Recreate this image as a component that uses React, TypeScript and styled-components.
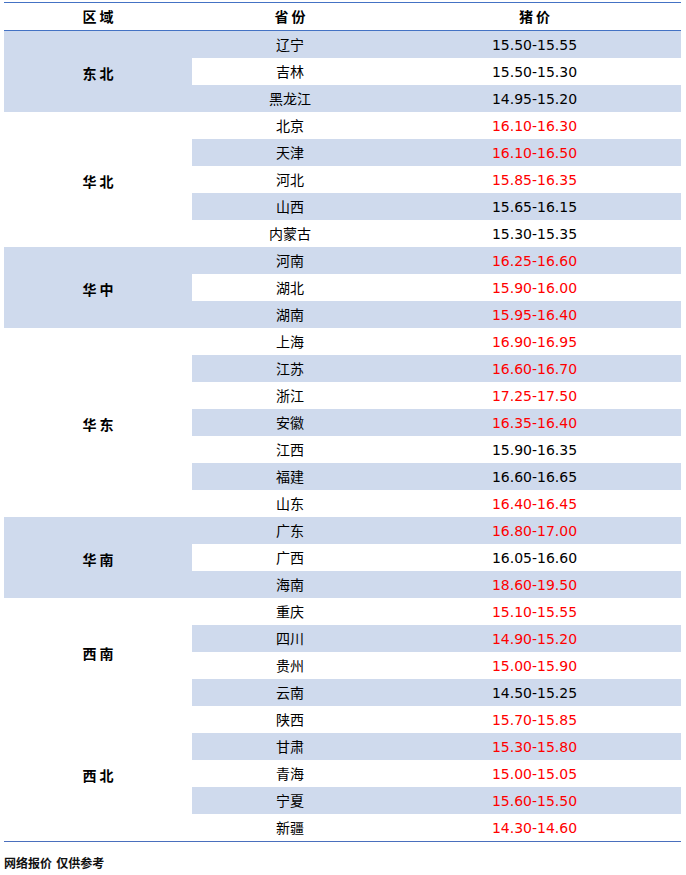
import { FC } from 'react';
import styled, { createGlobalStyle } from 'styled-components';

type Row = { province: string; price: string; up?: boolean };
type Group = { region: string; shaded: boolean; rows: Row[] };

const groups: Group[] = [
  {
    region: '东北',
    shaded: true,
    rows: [
      { province: '辽宁', price: '15.50-15.55' },
      { province: '吉林', price: '15.50-15.30' },
      { province: '黑龙江', price: '14.95-15.20' },
    ],
  },
  {
    region: '华北',
    shaded: false,
    rows: [
      { province: '北京', price: '16.10-16.30', up: true },
      { province: '天津', price: '16.10-16.50', up: true },
      { province: '河北', price: '15.85-16.35', up: true },
      { province: '山西', price: '15.65-16.15' },
      { province: '内蒙古', price: '15.30-15.35' },
    ],
  },
  {
    region: '华中',
    shaded: true,
    rows: [
      { province: '河南', price: '16.25-16.60', up: true },
      { province: '湖北', price: '15.90-16.00', up: true },
      { province: '湖南', price: '15.95-16.40', up: true },
    ],
  },
  {
    region: '华东',
    shaded: false,
    rows: [
      { province: '上海', price: '16.90-16.95', up: true },
      { province: '江苏', price: '16.60-16.70', up: true },
      { province: '浙江', price: '17.25-17.50', up: true },
      { province: '安徽', price: '16.35-16.40', up: true },
      { province: '江西', price: '15.90-16.35' },
      { province: '福建', price: '16.60-16.65' },
      { province: '山东', price: '16.40-16.45', up: true },
    ],
  },
  {
    region: '华南',
    shaded: true,
    rows: [
      { province: '广东', price: '16.80-17.00', up: true },
      { province: '广西', price: '16.05-16.60' },
      { province: '海南', price: '18.60-19.50', up: true },
    ],
  },
  {
    region: '西南',
    shaded: false,
    rows: [
      { province: '重庆', price: '15.10-15.55', up: true },
      { province: '四川', price: '14.90-15.20', up: true },
      { province: '贵州', price: '15.00-15.90', up: true },
      { province: '云南', price: '14.50-15.25' },
    ],
  },
  {
    region: '西北',
    shaded: false,
    rows: [
      { province: '陕西', price: '15.70-15.85', up: true },
      { province: '甘肃', price: '15.30-15.80', up: true },
      { province: '青海', price: '15.00-15.05', up: true },
      { province: '宁夏', price: '15.60-15.50', up: true },
      { province: '新疆', price: '14.30-14.60', up: true },
    ],
  },
];

const GlobalStyle = createGlobalStyle`
  body {
    margin: 0;
    background: #fff;
    font-family: "DejaVu Sans", "Noto Sans CJK SC", sans-serif;
    color: #000;
  }
`;

const App: FC = (): JSX.Element => {
  let index = 0;

  return (
    <Page>
      <GlobalStyle />
      <Table>
        <colgroup>
          <col style={{ width: 188 }} />
          <col style={{ width: 196 }} />
          <col style={{ width: 293 }} />
        </colgroup>
        <thead>
          <tr>
            <HeadCell>区域</HeadCell>
            <HeadCell>省份</HeadCell>
            <HeadCell>猪价</HeadCell>
          </tr>
        </thead>
        <tbody>
          {groups.map((group) =>
            group.rows.map((row, i) => {
              const shaded = index % 2 === 0;
              index += 1;
              return (
                <tr key={row.province}>
                  {i === 0 && (
                    <RegionCell rowSpan={group.rows.length} $shaded={group.shaded}>
                      {group.region}
                    </RegionCell>
                  )}
                  <Cell $shaded={shaded}>{row.province}</Cell>
                  <Cell $shaded={shaded} $up={row.up}>
                    {row.price}
                  </Cell>
                </tr>
              );
            })
          )}
        </tbody>
      </Table>
      <Note>网络报价 仅供参考</Note>
    </Page>
  );
};

const Page = styled.main`
  padding: 2px 0 0 4px;
  width: 677px;
`;

const Table = styled.table`
  width: 677px;
  border-collapse: collapse;
  table-layout: fixed;
  border-top: 1px solid #4472c4;
  border-bottom: 1px solid #4a6fbd;
`;

const HeadCell = styled.th`
  height: 27px;
  box-sizing: border-box;
  padding: 2px 0 0;
  font-size: 14px;
  font-weight: bold;
  letter-spacing: 3px;
  text-indent: 3px;
  line-height: 25px;
  text-align: center;
  border-bottom: 1px solid #4472c4;
`;

const RegionCell = styled.td<{ $shaded: boolean }>`
  padding: 2px 0 0;
  font-size: 14px;
  font-weight: bold;
  letter-spacing: 3px;
  text-indent: 3px;
  text-align: center;
  vertical-align: middle;
  background: ${({ $shaded }) => ($shaded ? '#cfdaed' : '#fff')};
`;

const Cell = styled.td<{ $shaded: boolean; $up?: boolean }>`
  height: 27px;
  box-sizing: border-box;
  padding: 2px 0 0;
  font-size: 14px;
  line-height: 25px;
  text-align: center;
  white-space: nowrap;
  color: ${({ $up }) => ($up ? '#ff0000' : '#000')};
  background: ${({ $shaded }) => ($shaded ? '#cfdaed' : '#fff')};
`;

const Note = styled.p`
  margin: 14px 0 0;
  font-size: 12px;
  font-weight: bold;
  line-height: 16px;
  color: #111;
`;

export default App;
